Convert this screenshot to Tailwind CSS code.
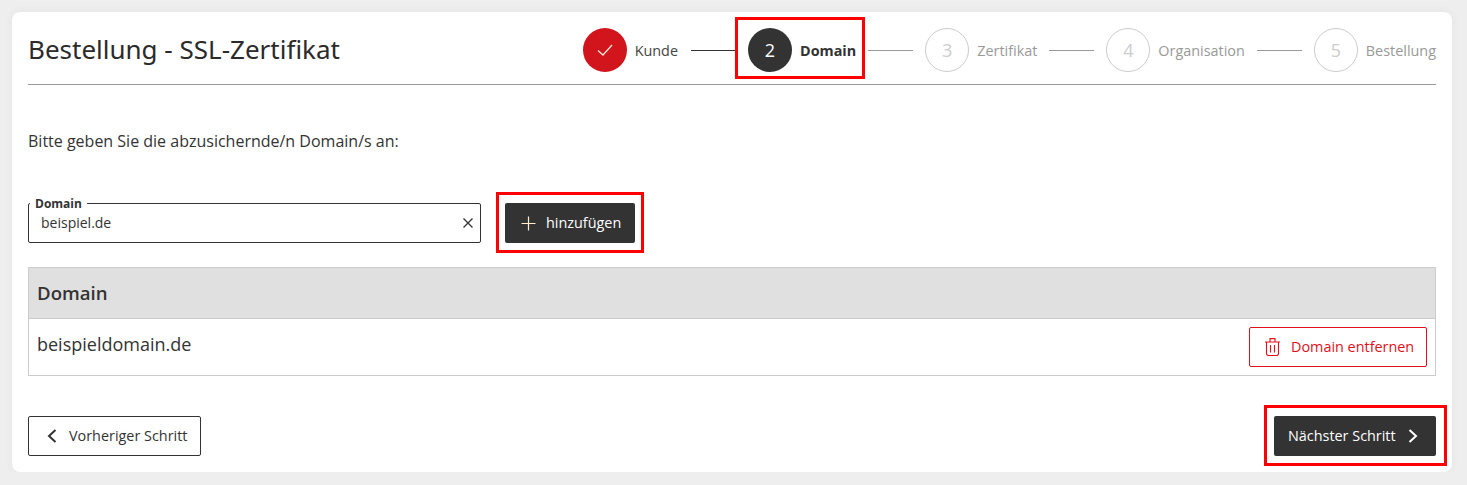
<!DOCTYPE html>
<html lang="de">
<head>
    <meta charset="UTF-8">
    <meta name="viewport" content="width=device-width, initial-scale=1.0">
    <script src="https://cdn.jsdelivr.net/npm/@tailwindcss/browser@4"></script>
    <title>Bestellung - SSL-Zertifikat</title>
</head>
<body class="bg-[#eeeeee] font-['Open_Sans',sans-serif] text-[#333333] overflow-hidden">
    <main class="relative mx-3 mt-3 h-[460px] w-[1440px] rounded-lg bg-white px-4 pt-4 shadow-[0_0_8px_rgba(0,0,0,0.05)]">
        <!-- Kopf mit Schritten -->
        <header class="flex h-[57px] items-start justify-between border-b border-[#999999]">
            <h1 class="mt-[2px] font-['Noto_Sans',sans-serif] text-[26px] leading-[38px] text-[#2b2b2b]">Bestellung - SSL-Zertifikat</h1>
            <ol class="flex items-center text-[14.4px]">
                <li class="flex size-11 items-center justify-center rounded-full bg-[#d2141c]">
                    <svg class="size-[18px]" viewBox="0 0 18 18" fill="none" stroke="#ffe9d6" stroke-width="1.3"><path d="M2 9.5 L7 14 L16 4"/></svg>
                </li>
                <li class="ml-2 pt-[2px] text-[#444444]">Kunde</li>
                <li class="ml-[13px] h-px w-[45px] bg-[#333333]"></li>
                <li class="relative ml-3 flex size-11 items-center justify-center rounded-full bg-[#333333] text-lg text-white">2</li>
                <li class="ml-2 pt-[2px] font-bold text-[#333333]">Domain</li>
                <li class="ml-3 h-px w-[45px] bg-[#999999]"></li>
                <li class="ml-3 flex size-11 items-center justify-center rounded-full border border-[#cccccc] text-lg text-[#cccccc]">3</li>
                <li class="ml-2 pt-[2px] text-[#999999]">Zertifikat</li>
                <li class="ml-3 h-px w-[45px] bg-[#999999]"></li>
                <li class="ml-3 flex size-11 items-center justify-center rounded-full border border-[#cccccc] text-lg text-[#cccccc]">4</li>
                <li class="ml-2 pt-[2px] text-[#999999]">Organisation</li>
                <li class="ml-3 h-px w-[45px] bg-[#999999]"></li>
                <li class="ml-3 flex size-11 items-center justify-center rounded-full border border-[#cccccc] text-lg text-[#cccccc]">5</li>
                <li class="ml-2 pt-[2px] text-[#999999]">Bestellung</li>
            </ol>
        </header>

        <p class="mt-[46px] text-base leading-5 text-[#333333]">Bitte geben Sie die abzusichernde/n Domain/s an:</p>

        <!-- Eingabe -->
        <div class="mt-[52px] flex items-start gap-6">
            <div class="relative flex h-10 w-[453px] items-center justify-between rounded-[2px] border border-[#333333] pl-3 pr-[6px]">
                <label class="absolute -top-[7px] left-[1px] bg-white px-[5px] text-xs font-bold leading-[14px] text-[#333333]">Domain</label>
                <span class="text-sm text-[#333333]">beispiel.de</span>
                <svg class="size-[12px]" viewBox="0 0 12 12" fill="none" stroke="#333333" stroke-width="1.3"><path d="M1.5 1.5 L10.5 10.5 M10.5 1.5 L1.5 10.5"/></svg>
            </div>
            <button class="flex h-10 w-[130px] items-center gap-[10px] rounded-[2px] bg-[#333333] pl-4 text-[14.4px] text-white">
                <svg class="size-[15px]" viewBox="0 0 15 15" fill="none" stroke="#ffeecf" stroke-width="1.2"><path d="M7.5 0.5 V14.5 M0.5 7.5 H14.5"/></svg>
                hinzufügen
            </button>
        </div>

        <!-- Tabelle -->
        <section class="mt-6 border border-[#cccccc]">
            <div class="flex h-[51px] items-center border-b border-[#cccccc] bg-[#e0e0e0] px-2 text-[18.6px] font-semibold text-[#333333]">Domain</div>
            <div class="flex h-[56px] items-start justify-between pl-2 pr-2">
                <span class="mt-[11px] text-lg leading-[28px] text-[#333333]">beispieldomain.de</span>
                <button class="mt-2 flex h-10 w-[178px] items-center gap-[11px] rounded-[2px] border border-[#e1101a] pl-[15px] text-[14.4px] text-[#e1101a]">
                    <svg class="h-[18px] w-[15px]" viewBox="0 0 15 18" fill="none" stroke="#e1101a" stroke-width="1.1"><path d="M0 4 H15 M5 4 V0.6 H10 V4 M1.5 4 V15.5 Q1.5 17.5 3.5 17.5 H11.5 Q13.5 17.5 13.5 15.5 V4 M5.5 7 V14.5 M9.5 7 V14.5"/></svg>
                    Domain entfernen
                </button>
            </div>
        </section>

        <!-- Navigation -->
        <div class="mt-10 flex justify-between">
            <button class="flex h-10 w-[173px] items-center gap-3 rounded-[2px] border border-[#333333] pl-[18px] text-[14.4px] text-[#333333]">
                <svg class="h-[14px] w-[10px]" viewBox="0 0 10 14" fill="none" stroke="#333333" stroke-width="2"><path d="M8.5 1 L2 7 L8.5 13"/></svg>
                Vorheriger Schritt
            </button>
            <button class="flex h-10 w-[162px] items-center gap-3 rounded-[2px] bg-[#333333] pl-[14px] text-[14.4px] text-white">
                Nächster Schritt
                <svg class="h-[14px] w-[10px]" viewBox="0 0 10 14" fill="none" stroke="#ffffff" stroke-width="2"><path d="M1.5 1 L8 7 L1.5 13"/></svg>
            </button>
        </div>

        <!-- rote Markierungen -->
        <div class="absolute left-[723px] top-[5px] h-[62px] w-[130px] border-[3px] border-[#ff0000]"></div>
        <div class="absolute left-[484px] top-[180px] h-[61px] w-[148px] border-[3px] border-[#ff0000]"></div>
        <div class="absolute left-[1252px] top-[393px] h-[61px] w-[183px] border-[3px] border-[#ff0000]"></div>
    </main>
</body>
</html>
